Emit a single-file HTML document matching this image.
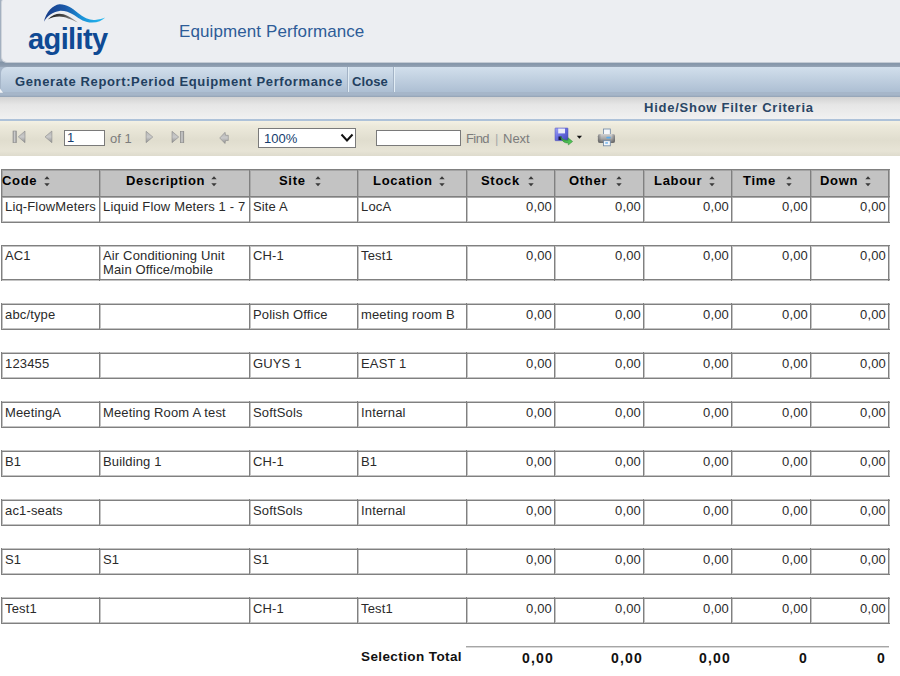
<!DOCTYPE html>
<html><head><meta charset="utf-8">
<style>
*{margin:0;padding:0;box-sizing:border-box}
html,body{width:900px;height:676px;overflow:hidden;background:#fff;font-family:"Liberation Sans",sans-serif;position:relative}
div{position:absolute}
#hdr{left:0;top:0;width:900px;height:67px;background:linear-gradient(#a3b0c0 0,#a3b0c0 61px,#8294a7 62px,#8a9aad 65px,#95a4b6 67px)}
#panel{left:1px;top:-3px;width:910px;height:66px;background:#eceef2;border-radius:6px;border-left:1px solid #d0d5dc;border-bottom:1px solid #c4cbd4}
#title{left:179px;top:22px;font-size:17px;color:#2d5c98;white-space:nowrap;letter-spacing:0.1px}

#tabs{left:0;top:67px;width:900px;height:30px;background:linear-gradient(#a6b6c9 25px,#a6b6c9 28px,#93a2b4 30px)}
#tabbar{left:1px;top:0;width:899px;height:25px;background:linear-gradient(#d2dfec,#adbfd3);border-top-left-radius:6px}
.tab{top:0;height:25px;font-weight:bold;font-size:13px;color:#223f60;line-height:30px;white-space:nowrap}
.tsep{top:0;width:2px;height:25px;border-left:1px solid #a3b3c6;border-right:1px solid #e2edf5}
#filt{left:0;top:97px;width:900px;height:22px;background:linear-gradient(#d3d3d3,#e6e6e6 35%,#f1f1f1)}
#filt span{position:absolute;left:644px;top:3px;font-weight:bold;font-size:13px;color:#2a4665;white-space:nowrap}
#tbline{left:0;top:119px;width:900px;height:2px;background:#aec2d9}
#tb{left:0;top:121px;width:900px;height:35px;background:linear-gradient(#f4f1e4,#ece9db 15%,#e0ddce 55%,#e7e4d6 85%,#dedbcd)}
.tbt{font-size:13px;color:#7c7c7c;white-space:nowrap}
.hrow{background:#c3c3c3;border:1px solid #7f7f7f;border-top:2px solid #8a8a8a}
.hc{top:173px;font-weight:bold;font-size:13px;color:#000;line-height:15px;white-space:nowrap;letter-spacing:0.7px}
.srt{top:176px;width:6px;height:11px}
.srt svg{display:block}
.row{border:1px solid #7f7f7f;background:#fff}
.vl{width:1px;background:#7f7f7f}
.c{font-size:13px;color:#2a2a2a;line-height:14px;padding:4px 4px 0 4px;white-space:nowrap;letter-spacing:0.15px}
.r{text-align:right;padding-right:2px}
.tot{top:650px;font-weight:bold;font-size:13px;color:#111;white-space:nowrap}
</style></head>
<body>
<div id="hdr"><div id="panel"></div>
<svg id="logo" style="position:absolute;left:0;top:0" width="120" height="60" viewBox="0 0 120 60">
 <defs><linearGradient id="sw" gradientUnits="userSpaceOnUse" x1="44" y1="0" x2="105" y2="0"><stop offset="0" stop-color="#183c88"/><stop offset="0.35" stop-color="#1b58a8"/><stop offset="0.62" stop-color="#1a92d8"/><stop offset="1" stop-color="#25baf0"/></linearGradient>
 <linearGradient id="gs" gradientUnits="userSpaceOnUse" x1="48" y1="0" x2="78" y2="0"><stop offset="0" stop-color="#1e1e1e"/><stop offset="0.5" stop-color="#444"/><stop offset="1" stop-color="#aaa"/></linearGradient></defs>
 <path d="M43.9 21.8 C46 12 53 5 59.4 4.3 C66 4 72 8 78 13 C84 18 90 20.5 95 20 C99 19.5 103 18.5 105.3 17.5 C102 20.5 98 22.5 92 22.6 C85 22.5 80 19.5 74 15 C69 12 64 10.5 59.4 10.9 C53 11.5 47 16 43.9 21.8 Z" fill="url(#sw)"/>
 <path d="M47.8 19.5 C52 15.5 56 13.8 59.4 13.8 C65 13.8 70 17 78.1 22.6 C71 19.5 65 16.5 59.4 16.5 C55 16.5 51 17.8 47.8 19.5 Z" fill="url(#gs)"/>
</svg>
<div style="left:28px;top:23px;font-size:29px;font-weight:bold;color:#0f4a94;letter-spacing:-0.6px;white-space:nowrap">agility</div>
<div id="title">Equipment Performance</div>
</div>
<div id="tabs"><div id="tabbar">
<div class="tab" style="left:14px;letter-spacing:0.62px">Generate Report:Period Equipment Performance</div>
<div class="tsep" style="left:346px"></div>
<div class="tab" style="left:351px;letter-spacing:0.1px">Close</div>
<div class="tsep" style="left:392px"></div>
</div></div>
<svg style="position:absolute;left:0;top:88px;z-index:3" width="4" height="5"><path d="M0 0.5 L3 4.8 L0 4.8Z" fill="#f4f6f8"/></svg>
<div id="filt"><span style="letter-spacing:0.75px">Hide/Show Filter Criteria</span></div>
<div id="tbline"></div>
<div id="tb">
</div>
<svg style="position:absolute;left:0;top:121px;z-index:5" width="640" height="34" viewBox="0 121 640 34">
<defs>
<linearGradient id="ig" x1="0" x2="0" y1="0" y2="1"><stop offset="0" stop-color="#b4b4b4"/><stop offset="0.5" stop-color="#cacaca"/><stop offset="1" stop-color="#8e8e8e"/></linearGradient>
<linearGradient id="bg2" x1="0" x2="1"><stop offset="0" stop-color="#9a9a9a"/><stop offset="0.5" stop-color="#cfcfcf"/><stop offset="1" stop-color="#8a8a8a"/></linearGradient>
</defs>
<rect x="13" y="131" width="3.3" height="11.7" fill="url(#bg2)" stroke="#8c8c8c" stroke-width="0.6"/>
<path d="M25 131 L18.3 136.85 L25 142.7Z" fill="url(#ig)" stroke="#8c8c8c" stroke-width="0.6"/>
<path d="M51.9 131 L45 136.85 L51.9 142.7Z" fill="url(#ig)" stroke="#8c8c8c" stroke-width="0.6"/>
<path d="M146.1 131.3 L152.8 137 L146.1 142.7Z" fill="url(#ig)" stroke="#8c8c8c" stroke-width="0.6"/>
<path d="M172 131.3 L178.7 137 L172 142.7Z" fill="url(#ig)" stroke="#8c8c8c" stroke-width="0.6"/>
<rect x="180.3" y="131.3" width="3.5" height="11.4" fill="url(#bg2)" stroke="#8c8c8c" stroke-width="0.6"/>
<path d="M219.7 138 L225 132.3 L225.6 135.3 L228.3 135.3 L228.3 140.5 L225.6 140.5 L225 143.5Z" fill="url(#ig)" stroke="#8c8c8c" stroke-width="0.6"/>
<path d="M341.5 134.5 L347 140.5 L352.5 134.5" fill="none" stroke="#111" stroke-width="2"/>
<defs>
<linearGradient id="fl" x1="0" y1="0" x2="1" y2="1"><stop offset="0" stop-color="#a3a5f7"/><stop offset="0.45" stop-color="#6b6fe2"/><stop offset="1" stop-color="#4146b8"/></linearGradient>
<linearGradient id="pb" x1="0" y1="0" x2="0" y2="1"><stop offset="0" stop-color="#d2d2d2"/><stop offset="0.5" stop-color="#a8a8a8"/><stop offset="1" stop-color="#6a6a6a"/></linearGradient>
<linearGradient id="ph" x1="0" y1="0" x2="1" y2="0"><stop offset="0" stop-color="#555" stop-opacity="0.6"/><stop offset="0.2" stop-color="#555" stop-opacity="0"/><stop offset="0.8" stop-color="#555" stop-opacity="0"/><stop offset="1" stop-color="#555" stop-opacity="0.6"/></linearGradient>
<linearGradient id="gr" x1="0" y1="0" x2="1" y2="1"><stop offset="0" stop-color="#2e9a3a"/><stop offset="1" stop-color="#5fd05f"/></linearGradient>
</defs>
<rect x="555" y="128" width="13" height="12.7" rx="0.6" fill="url(#fl)" stroke="#4a4fb0" stroke-width="0.5"/>
<rect x="558.2" y="128.6" width="6.8" height="4.8" fill="#ececf8"/>
<rect x="558.5" y="136.5" width="3" height="3.5" fill="#1a1a40"/>
<path d="M560.5 136 C562 139.5 565 140.5 568 140.2 L568 137.8 L572.6 141.5 L568.3 145 L568.3 143 C564 143.3 561.2 140.5 560.5 136Z" fill="url(#gr)" stroke="#2b8535" stroke-width="0.5"/>
<path d="M576.8 135.7 L582 135.7 L579.4 138.8Z" fill="#111"/>
<rect x="603.6" y="129" width="6.7" height="5.5" fill="#f4f7fb" stroke="#6f87a3" stroke-width="0.8"/>
<rect x="597.9" y="134" width="17.1" height="9" rx="2.2" fill="url(#pb)"/>
<rect x="597.9" y="134" width="17.1" height="9" rx="2.2" fill="url(#ph)"/>
<rect x="606.3" y="136.8" width="4.5" height="1.8" rx="0.8" fill="#5aaaea"/>
<rect x="603.6" y="140.7" width="6.7" height="5.1" fill="#f4f7fb" stroke="#6f87a3" stroke-width="0.8"/>
<rect x="605.3" y="142.3" width="2.6" height="1.3" fill="#5aaaea"/>
</svg>
<div class="tbt" style="left:110px;top:131px">of 1</div>
<div style="left:64px;top:130px;width:41px;height:16px;background:#fff;border:1px solid #7a7a7a;font-size:13px;color:#143c6e;line-height:14px;padding-left:2px">1</div>
<div style="left:258px;top:128px;width:98px;height:20px;background:#fff;border:1px solid #7a7a7a;font-size:13px;color:#143c6e;line-height:20px;padding-left:5px">100%</div>
<div style="left:376px;top:130px;width:85px;height:16px;background:#fff;border:1px solid #7a7a7a"></div>
<div class="tbt" style="left:466px;top:131px;letter-spacing:-0.6px">Find</div>
<div class="tbt" style="left:495px;top:131px;color:#aaa">|</div>
<div class="tbt" style="left:503px;top:131px">Next</div>
<div style="left:1px;top:169px;width:889px;height:29px;background:#c3c3c3"></div>
<div style="left:1px;top:169px;width:889px;height:1px;background:#808080"></div>
<div style="left:1px;top:170px;width:889px;height:1px;background:#a4a4a4"></div>
<div style="left:1px;top:196px;width:889px;height:1px;background:#808080"></div>
<div style="left:1px;top:197px;width:889px;height:1px;background:#a8a8a8"></div>
<div style="left:1px;top:169px;width:1px;height:29px;background:#808080"></div>
<div style="left:2px;top:171px;width:1px;height:25px;background:#a8a8a8"></div>
<div style="left:99px;top:169px;width:1px;height:29px;background:#808080"></div>
<div style="left:100px;top:171px;width:1px;height:25px;background:#a8a8a8"></div>
<div style="left:249px;top:169px;width:1px;height:29px;background:#808080"></div>
<div style="left:250px;top:171px;width:1px;height:25px;background:#a8a8a8"></div>
<div style="left:357px;top:169px;width:1px;height:29px;background:#808080"></div>
<div style="left:358px;top:171px;width:1px;height:25px;background:#a8a8a8"></div>
<div style="left:466px;top:169px;width:1px;height:29px;background:#808080"></div>
<div style="left:467px;top:171px;width:1px;height:25px;background:#a8a8a8"></div>
<div style="left:554px;top:169px;width:1px;height:29px;background:#808080"></div>
<div style="left:555px;top:171px;width:1px;height:25px;background:#a8a8a8"></div>
<div style="left:643px;top:169px;width:1px;height:29px;background:#808080"></div>
<div style="left:644px;top:171px;width:1px;height:25px;background:#a8a8a8"></div>
<div style="left:731px;top:169px;width:1px;height:29px;background:#808080"></div>
<div style="left:732px;top:171px;width:1px;height:25px;background:#a8a8a8"></div>
<div style="left:810px;top:169px;width:1px;height:29px;background:#808080"></div>
<div style="left:811px;top:171px;width:1px;height:25px;background:#a8a8a8"></div>
<div style="left:888px;top:169px;width:1px;height:29px;background:#808080"></div>
<div style="left:889px;top:171px;width:1px;height:25px;background:#a8a8a8"></div>
<div class="hc" style="left:2px">Code</div>
<div class="srt" style="left:44px"><svg width="6" height="11" viewBox="0 0 6 11"><path d="M0.3 3.2 L3 0.2 L5.7 3.2Z M0.3 7.3 L5.7 7.3 L3 10.3Z" fill="#3a3a3a"/></svg></div>
<div class="hc" style="left:126px">Description</div>
<div class="srt" style="left:211px"><svg width="6" height="11" viewBox="0 0 6 11"><path d="M0.3 3.2 L3 0.2 L5.7 3.2Z M0.3 7.3 L5.7 7.3 L3 10.3Z" fill="#3a3a3a"/></svg></div>
<div class="hc" style="left:279px">Site</div>
<div class="srt" style="left:315px"><svg width="6" height="11" viewBox="0 0 6 11"><path d="M0.3 3.2 L3 0.2 L5.7 3.2Z M0.3 7.3 L5.7 7.3 L3 10.3Z" fill="#3a3a3a"/></svg></div>
<div class="hc" style="left:373px">Location</div>
<div class="srt" style="left:439px"><svg width="6" height="11" viewBox="0 0 6 11"><path d="M0.3 3.2 L3 0.2 L5.7 3.2Z M0.3 7.3 L5.7 7.3 L3 10.3Z" fill="#3a3a3a"/></svg></div>
<div class="hc" style="left:481px">Stock</div>
<div class="srt" style="left:528px"><svg width="6" height="11" viewBox="0 0 6 11"><path d="M0.3 3.2 L3 0.2 L5.7 3.2Z M0.3 7.3 L5.7 7.3 L3 10.3Z" fill="#3a3a3a"/></svg></div>
<div class="hc" style="left:569px">Other</div>
<div class="srt" style="left:616px"><svg width="6" height="11" viewBox="0 0 6 11"><path d="M0.3 3.2 L3 0.2 L5.7 3.2Z M0.3 7.3 L5.7 7.3 L3 10.3Z" fill="#3a3a3a"/></svg></div>
<div class="hc" style="left:654px">Labour</div>
<div class="srt" style="left:709px"><svg width="6" height="11" viewBox="0 0 6 11"><path d="M0.3 3.2 L3 0.2 L5.7 3.2Z M0.3 7.3 L5.7 7.3 L3 10.3Z" fill="#3a3a3a"/></svg></div>
<div class="hc" style="left:743px">Time</div>
<div class="srt" style="left:786px"><svg width="6" height="11" viewBox="0 0 6 11"><path d="M0.3 3.2 L3 0.2 L5.7 3.2Z M0.3 7.3 L5.7 7.3 L3 10.3Z" fill="#3a3a3a"/></svg></div>
<div class="hc" style="left:820px">Down</div>
<div class="srt" style="left:865px"><svg width="6" height="11" viewBox="0 0 6 11"><path d="M0.3 3.2 L3 0.2 L5.7 3.2Z M0.3 7.3 L5.7 7.3 L3 10.3Z" fill="#3a3a3a"/></svg></div>
<div style="left:1px;top:222px;width:889px;height:1px;background:#808080"></div>
<div style="left:1px;top:221px;width:889px;height:1px;background:#c4c4c4"></div>
<div style="left:1px;top:198px;width:1px;height:25px;background:#808080"></div>
<div style="left:2px;top:198px;width:1px;height:23px;background:#c4c4c4"></div>
<div style="left:99px;top:198px;width:1px;height:25px;background:#808080"></div>
<div style="left:100px;top:198px;width:1px;height:23px;background:#c4c4c4"></div>
<div style="left:249px;top:198px;width:1px;height:25px;background:#808080"></div>
<div style="left:250px;top:198px;width:1px;height:23px;background:#c4c4c4"></div>
<div style="left:357px;top:198px;width:1px;height:25px;background:#808080"></div>
<div style="left:358px;top:198px;width:1px;height:23px;background:#c4c4c4"></div>
<div style="left:466px;top:198px;width:1px;height:25px;background:#808080"></div>
<div style="left:467px;top:198px;width:1px;height:23px;background:#c4c4c4"></div>
<div style="left:554px;top:198px;width:1px;height:25px;background:#808080"></div>
<div style="left:555px;top:198px;width:1px;height:23px;background:#c4c4c4"></div>
<div style="left:643px;top:198px;width:1px;height:25px;background:#808080"></div>
<div style="left:644px;top:198px;width:1px;height:23px;background:#c4c4c4"></div>
<div style="left:731px;top:198px;width:1px;height:25px;background:#808080"></div>
<div style="left:732px;top:198px;width:1px;height:23px;background:#c4c4c4"></div>
<div style="left:810px;top:198px;width:1px;height:25px;background:#808080"></div>
<div style="left:811px;top:198px;width:1px;height:23px;background:#c4c4c4"></div>
<div style="left:888px;top:198px;width:1px;height:25px;background:#808080"></div>
<div style="left:889px;top:198px;width:1px;height:23px;background:#c4c4c4"></div>
<div class="c" style="left:1px;top:196px;width:98px">Liq-FlowMeters</div>
<div class="c" style="left:99px;top:196px;width:150px">Liquid Flow Meters 1 - 7</div>
<div class="c" style="left:249px;top:196px;width:108px">Site A</div>
<div class="c" style="left:357px;top:196px;width:109px">LocA</div>
<div class="c r" style="left:466px;top:196px;width:88px">0,00</div>
<div class="c r" style="left:554px;top:196px;width:89px">0,00</div>
<div class="c r" style="left:643px;top:196px;width:88px">0,00</div>
<div class="c r" style="left:731px;top:196px;width:79px">0,00</div>
<div class="c r" style="left:810px;top:196px;width:78px">0,00</div>
<div style="left:1px;top:245px;width:889px;height:1px;background:#808080"></div>
<div style="left:1px;top:246px;width:889px;height:1px;background:#c4c4c4"></div>
<div style="left:1px;top:279px;width:889px;height:1px;background:#808080"></div>
<div style="left:1px;top:280px;width:889px;height:1px;background:#c4c4c4"></div>
<div style="left:1px;top:245px;width:1px;height:36px;background:#808080"></div>
<div style="left:2px;top:247px;width:1px;height:32px;background:#c4c4c4"></div>
<div style="left:99px;top:245px;width:1px;height:36px;background:#808080"></div>
<div style="left:100px;top:247px;width:1px;height:32px;background:#c4c4c4"></div>
<div style="left:249px;top:245px;width:1px;height:36px;background:#808080"></div>
<div style="left:250px;top:247px;width:1px;height:32px;background:#c4c4c4"></div>
<div style="left:357px;top:245px;width:1px;height:36px;background:#808080"></div>
<div style="left:358px;top:247px;width:1px;height:32px;background:#c4c4c4"></div>
<div style="left:466px;top:245px;width:1px;height:36px;background:#808080"></div>
<div style="left:467px;top:247px;width:1px;height:32px;background:#c4c4c4"></div>
<div style="left:554px;top:245px;width:1px;height:36px;background:#808080"></div>
<div style="left:555px;top:247px;width:1px;height:32px;background:#c4c4c4"></div>
<div style="left:643px;top:245px;width:1px;height:36px;background:#808080"></div>
<div style="left:644px;top:247px;width:1px;height:32px;background:#c4c4c4"></div>
<div style="left:731px;top:245px;width:1px;height:36px;background:#808080"></div>
<div style="left:732px;top:247px;width:1px;height:32px;background:#c4c4c4"></div>
<div style="left:810px;top:245px;width:1px;height:36px;background:#808080"></div>
<div style="left:811px;top:247px;width:1px;height:32px;background:#c4c4c4"></div>
<div style="left:888px;top:245px;width:1px;height:36px;background:#808080"></div>
<div style="left:889px;top:247px;width:1px;height:32px;background:#c4c4c4"></div>
<div class="c" style="left:1px;top:245px;width:98px">AC1</div>
<div class="c" style="left:99px;top:245px;width:150px">Air Conditioning Unit<br>Main Office/mobile</div>
<div class="c" style="left:249px;top:245px;width:108px">CH-1</div>
<div class="c" style="left:357px;top:245px;width:109px">Test1</div>
<div class="c r" style="left:466px;top:245px;width:88px">0,00</div>
<div class="c r" style="left:554px;top:245px;width:89px">0,00</div>
<div class="c r" style="left:643px;top:245px;width:88px">0,00</div>
<div class="c r" style="left:731px;top:245px;width:79px">0,00</div>
<div class="c r" style="left:810px;top:245px;width:78px">0,00</div>
<div style="left:1px;top:304px;width:889px;height:1px;background:#808080"></div>
<div style="left:1px;top:303px;width:889px;height:1px;background:#c4c4c4"></div>
<div style="left:1px;top:329px;width:889px;height:1px;background:#808080"></div>
<div style="left:1px;top:328px;width:889px;height:1px;background:#c4c4c4"></div>
<div style="left:1px;top:303px;width:1px;height:27px;background:#808080"></div>
<div style="left:2px;top:305px;width:1px;height:23px;background:#c4c4c4"></div>
<div style="left:99px;top:303px;width:1px;height:27px;background:#808080"></div>
<div style="left:100px;top:305px;width:1px;height:23px;background:#c4c4c4"></div>
<div style="left:249px;top:303px;width:1px;height:27px;background:#808080"></div>
<div style="left:250px;top:305px;width:1px;height:23px;background:#c4c4c4"></div>
<div style="left:357px;top:303px;width:1px;height:27px;background:#808080"></div>
<div style="left:358px;top:305px;width:1px;height:23px;background:#c4c4c4"></div>
<div style="left:466px;top:303px;width:1px;height:27px;background:#808080"></div>
<div style="left:467px;top:305px;width:1px;height:23px;background:#c4c4c4"></div>
<div style="left:554px;top:303px;width:1px;height:27px;background:#808080"></div>
<div style="left:555px;top:305px;width:1px;height:23px;background:#c4c4c4"></div>
<div style="left:643px;top:303px;width:1px;height:27px;background:#808080"></div>
<div style="left:644px;top:305px;width:1px;height:23px;background:#c4c4c4"></div>
<div style="left:731px;top:303px;width:1px;height:27px;background:#808080"></div>
<div style="left:732px;top:305px;width:1px;height:23px;background:#c4c4c4"></div>
<div style="left:810px;top:303px;width:1px;height:27px;background:#808080"></div>
<div style="left:811px;top:305px;width:1px;height:23px;background:#c4c4c4"></div>
<div style="left:888px;top:303px;width:1px;height:27px;background:#808080"></div>
<div style="left:889px;top:305px;width:1px;height:23px;background:#c4c4c4"></div>
<div class="c" style="left:1px;top:304px;width:98px">abc/type</div>
<div class="c" style="left:99px;top:304px;width:150px"></div>
<div class="c" style="left:249px;top:304px;width:108px">Polish Office</div>
<div class="c" style="left:357px;top:304px;width:109px">meeting room B</div>
<div class="c r" style="left:466px;top:304px;width:88px">0,00</div>
<div class="c r" style="left:554px;top:304px;width:89px">0,00</div>
<div class="c r" style="left:643px;top:304px;width:88px">0,00</div>
<div class="c r" style="left:731px;top:304px;width:79px">0,00</div>
<div class="c r" style="left:810px;top:304px;width:78px">0,00</div>
<div style="left:1px;top:353px;width:889px;height:1px;background:#808080"></div>
<div style="left:1px;top:352px;width:889px;height:1px;background:#c4c4c4"></div>
<div style="left:1px;top:378px;width:889px;height:1px;background:#808080"></div>
<div style="left:1px;top:377px;width:889px;height:1px;background:#c4c4c4"></div>
<div style="left:1px;top:352px;width:1px;height:27px;background:#808080"></div>
<div style="left:2px;top:354px;width:1px;height:23px;background:#c4c4c4"></div>
<div style="left:99px;top:352px;width:1px;height:27px;background:#808080"></div>
<div style="left:100px;top:354px;width:1px;height:23px;background:#c4c4c4"></div>
<div style="left:249px;top:352px;width:1px;height:27px;background:#808080"></div>
<div style="left:250px;top:354px;width:1px;height:23px;background:#c4c4c4"></div>
<div style="left:357px;top:352px;width:1px;height:27px;background:#808080"></div>
<div style="left:358px;top:354px;width:1px;height:23px;background:#c4c4c4"></div>
<div style="left:466px;top:352px;width:1px;height:27px;background:#808080"></div>
<div style="left:467px;top:354px;width:1px;height:23px;background:#c4c4c4"></div>
<div style="left:554px;top:352px;width:1px;height:27px;background:#808080"></div>
<div style="left:555px;top:354px;width:1px;height:23px;background:#c4c4c4"></div>
<div style="left:643px;top:352px;width:1px;height:27px;background:#808080"></div>
<div style="left:644px;top:354px;width:1px;height:23px;background:#c4c4c4"></div>
<div style="left:731px;top:352px;width:1px;height:27px;background:#808080"></div>
<div style="left:732px;top:354px;width:1px;height:23px;background:#c4c4c4"></div>
<div style="left:810px;top:352px;width:1px;height:27px;background:#808080"></div>
<div style="left:811px;top:354px;width:1px;height:23px;background:#c4c4c4"></div>
<div style="left:888px;top:352px;width:1px;height:27px;background:#808080"></div>
<div style="left:889px;top:354px;width:1px;height:23px;background:#c4c4c4"></div>
<div class="c" style="left:1px;top:353px;width:98px">123455</div>
<div class="c" style="left:99px;top:353px;width:150px"></div>
<div class="c" style="left:249px;top:353px;width:108px">GUYS 1</div>
<div class="c" style="left:357px;top:353px;width:109px">EAST 1</div>
<div class="c r" style="left:466px;top:353px;width:88px">0,00</div>
<div class="c r" style="left:554px;top:353px;width:89px">0,00</div>
<div class="c r" style="left:643px;top:353px;width:88px">0,00</div>
<div class="c r" style="left:731px;top:353px;width:79px">0,00</div>
<div class="c r" style="left:810px;top:353px;width:78px">0,00</div>
<div style="left:1px;top:402px;width:889px;height:1px;background:#808080"></div>
<div style="left:1px;top:401px;width:889px;height:1px;background:#c4c4c4"></div>
<div style="left:1px;top:427px;width:889px;height:1px;background:#808080"></div>
<div style="left:1px;top:426px;width:889px;height:1px;background:#c4c4c4"></div>
<div style="left:1px;top:401px;width:1px;height:27px;background:#808080"></div>
<div style="left:2px;top:403px;width:1px;height:23px;background:#c4c4c4"></div>
<div style="left:99px;top:401px;width:1px;height:27px;background:#808080"></div>
<div style="left:100px;top:403px;width:1px;height:23px;background:#c4c4c4"></div>
<div style="left:249px;top:401px;width:1px;height:27px;background:#808080"></div>
<div style="left:250px;top:403px;width:1px;height:23px;background:#c4c4c4"></div>
<div style="left:357px;top:401px;width:1px;height:27px;background:#808080"></div>
<div style="left:358px;top:403px;width:1px;height:23px;background:#c4c4c4"></div>
<div style="left:466px;top:401px;width:1px;height:27px;background:#808080"></div>
<div style="left:467px;top:403px;width:1px;height:23px;background:#c4c4c4"></div>
<div style="left:554px;top:401px;width:1px;height:27px;background:#808080"></div>
<div style="left:555px;top:403px;width:1px;height:23px;background:#c4c4c4"></div>
<div style="left:643px;top:401px;width:1px;height:27px;background:#808080"></div>
<div style="left:644px;top:403px;width:1px;height:23px;background:#c4c4c4"></div>
<div style="left:731px;top:401px;width:1px;height:27px;background:#808080"></div>
<div style="left:732px;top:403px;width:1px;height:23px;background:#c4c4c4"></div>
<div style="left:810px;top:401px;width:1px;height:27px;background:#808080"></div>
<div style="left:811px;top:403px;width:1px;height:23px;background:#c4c4c4"></div>
<div style="left:888px;top:401px;width:1px;height:27px;background:#808080"></div>
<div style="left:889px;top:403px;width:1px;height:23px;background:#c4c4c4"></div>
<div class="c" style="left:1px;top:402px;width:98px">MeetingA</div>
<div class="c" style="left:99px;top:402px;width:150px">Meeting Room A test</div>
<div class="c" style="left:249px;top:402px;width:108px">SoftSols</div>
<div class="c" style="left:357px;top:402px;width:109px">Internal</div>
<div class="c r" style="left:466px;top:402px;width:88px">0,00</div>
<div class="c r" style="left:554px;top:402px;width:89px">0,00</div>
<div class="c r" style="left:643px;top:402px;width:88px">0,00</div>
<div class="c r" style="left:731px;top:402px;width:79px">0,00</div>
<div class="c r" style="left:810px;top:402px;width:78px">0,00</div>
<div style="left:1px;top:451px;width:889px;height:1px;background:#808080"></div>
<div style="left:1px;top:450px;width:889px;height:1px;background:#c4c4c4"></div>
<div style="left:1px;top:476px;width:889px;height:1px;background:#808080"></div>
<div style="left:1px;top:475px;width:889px;height:1px;background:#c4c4c4"></div>
<div style="left:1px;top:450px;width:1px;height:27px;background:#808080"></div>
<div style="left:2px;top:452px;width:1px;height:23px;background:#c4c4c4"></div>
<div style="left:99px;top:450px;width:1px;height:27px;background:#808080"></div>
<div style="left:100px;top:452px;width:1px;height:23px;background:#c4c4c4"></div>
<div style="left:249px;top:450px;width:1px;height:27px;background:#808080"></div>
<div style="left:250px;top:452px;width:1px;height:23px;background:#c4c4c4"></div>
<div style="left:357px;top:450px;width:1px;height:27px;background:#808080"></div>
<div style="left:358px;top:452px;width:1px;height:23px;background:#c4c4c4"></div>
<div style="left:466px;top:450px;width:1px;height:27px;background:#808080"></div>
<div style="left:467px;top:452px;width:1px;height:23px;background:#c4c4c4"></div>
<div style="left:554px;top:450px;width:1px;height:27px;background:#808080"></div>
<div style="left:555px;top:452px;width:1px;height:23px;background:#c4c4c4"></div>
<div style="left:643px;top:450px;width:1px;height:27px;background:#808080"></div>
<div style="left:644px;top:452px;width:1px;height:23px;background:#c4c4c4"></div>
<div style="left:731px;top:450px;width:1px;height:27px;background:#808080"></div>
<div style="left:732px;top:452px;width:1px;height:23px;background:#c4c4c4"></div>
<div style="left:810px;top:450px;width:1px;height:27px;background:#808080"></div>
<div style="left:811px;top:452px;width:1px;height:23px;background:#c4c4c4"></div>
<div style="left:888px;top:450px;width:1px;height:27px;background:#808080"></div>
<div style="left:889px;top:452px;width:1px;height:23px;background:#c4c4c4"></div>
<div class="c" style="left:1px;top:451px;width:98px">B1</div>
<div class="c" style="left:99px;top:451px;width:150px">Building 1</div>
<div class="c" style="left:249px;top:451px;width:108px">CH-1</div>
<div class="c" style="left:357px;top:451px;width:109px">B1</div>
<div class="c r" style="left:466px;top:451px;width:88px">0,00</div>
<div class="c r" style="left:554px;top:451px;width:89px">0,00</div>
<div class="c r" style="left:643px;top:451px;width:88px">0,00</div>
<div class="c r" style="left:731px;top:451px;width:79px">0,00</div>
<div class="c r" style="left:810px;top:451px;width:78px">0,00</div>
<div style="left:1px;top:500px;width:889px;height:1px;background:#808080"></div>
<div style="left:1px;top:499px;width:889px;height:1px;background:#c4c4c4"></div>
<div style="left:1px;top:525px;width:889px;height:1px;background:#808080"></div>
<div style="left:1px;top:524px;width:889px;height:1px;background:#c4c4c4"></div>
<div style="left:1px;top:499px;width:1px;height:27px;background:#808080"></div>
<div style="left:2px;top:501px;width:1px;height:23px;background:#c4c4c4"></div>
<div style="left:99px;top:499px;width:1px;height:27px;background:#808080"></div>
<div style="left:100px;top:501px;width:1px;height:23px;background:#c4c4c4"></div>
<div style="left:249px;top:499px;width:1px;height:27px;background:#808080"></div>
<div style="left:250px;top:501px;width:1px;height:23px;background:#c4c4c4"></div>
<div style="left:357px;top:499px;width:1px;height:27px;background:#808080"></div>
<div style="left:358px;top:501px;width:1px;height:23px;background:#c4c4c4"></div>
<div style="left:466px;top:499px;width:1px;height:27px;background:#808080"></div>
<div style="left:467px;top:501px;width:1px;height:23px;background:#c4c4c4"></div>
<div style="left:554px;top:499px;width:1px;height:27px;background:#808080"></div>
<div style="left:555px;top:501px;width:1px;height:23px;background:#c4c4c4"></div>
<div style="left:643px;top:499px;width:1px;height:27px;background:#808080"></div>
<div style="left:644px;top:501px;width:1px;height:23px;background:#c4c4c4"></div>
<div style="left:731px;top:499px;width:1px;height:27px;background:#808080"></div>
<div style="left:732px;top:501px;width:1px;height:23px;background:#c4c4c4"></div>
<div style="left:810px;top:499px;width:1px;height:27px;background:#808080"></div>
<div style="left:811px;top:501px;width:1px;height:23px;background:#c4c4c4"></div>
<div style="left:888px;top:499px;width:1px;height:27px;background:#808080"></div>
<div style="left:889px;top:501px;width:1px;height:23px;background:#c4c4c4"></div>
<div class="c" style="left:1px;top:500px;width:98px">ac1-seats</div>
<div class="c" style="left:99px;top:500px;width:150px"></div>
<div class="c" style="left:249px;top:500px;width:108px">SoftSols</div>
<div class="c" style="left:357px;top:500px;width:109px">Internal</div>
<div class="c r" style="left:466px;top:500px;width:88px">0,00</div>
<div class="c r" style="left:554px;top:500px;width:89px">0,00</div>
<div class="c r" style="left:643px;top:500px;width:88px">0,00</div>
<div class="c r" style="left:731px;top:500px;width:79px">0,00</div>
<div class="c r" style="left:810px;top:500px;width:78px">0,00</div>
<div style="left:1px;top:549px;width:889px;height:1px;background:#808080"></div>
<div style="left:1px;top:548px;width:889px;height:1px;background:#c4c4c4"></div>
<div style="left:1px;top:574px;width:889px;height:1px;background:#808080"></div>
<div style="left:1px;top:573px;width:889px;height:1px;background:#c4c4c4"></div>
<div style="left:1px;top:548px;width:1px;height:27px;background:#808080"></div>
<div style="left:2px;top:550px;width:1px;height:23px;background:#c4c4c4"></div>
<div style="left:99px;top:548px;width:1px;height:27px;background:#808080"></div>
<div style="left:100px;top:550px;width:1px;height:23px;background:#c4c4c4"></div>
<div style="left:249px;top:548px;width:1px;height:27px;background:#808080"></div>
<div style="left:250px;top:550px;width:1px;height:23px;background:#c4c4c4"></div>
<div style="left:357px;top:548px;width:1px;height:27px;background:#808080"></div>
<div style="left:358px;top:550px;width:1px;height:23px;background:#c4c4c4"></div>
<div style="left:466px;top:548px;width:1px;height:27px;background:#808080"></div>
<div style="left:467px;top:550px;width:1px;height:23px;background:#c4c4c4"></div>
<div style="left:554px;top:548px;width:1px;height:27px;background:#808080"></div>
<div style="left:555px;top:550px;width:1px;height:23px;background:#c4c4c4"></div>
<div style="left:643px;top:548px;width:1px;height:27px;background:#808080"></div>
<div style="left:644px;top:550px;width:1px;height:23px;background:#c4c4c4"></div>
<div style="left:731px;top:548px;width:1px;height:27px;background:#808080"></div>
<div style="left:732px;top:550px;width:1px;height:23px;background:#c4c4c4"></div>
<div style="left:810px;top:548px;width:1px;height:27px;background:#808080"></div>
<div style="left:811px;top:550px;width:1px;height:23px;background:#c4c4c4"></div>
<div style="left:888px;top:548px;width:1px;height:27px;background:#808080"></div>
<div style="left:889px;top:550px;width:1px;height:23px;background:#c4c4c4"></div>
<div class="c" style="left:1px;top:549px;width:98px">S1</div>
<div class="c" style="left:99px;top:549px;width:150px">S1</div>
<div class="c" style="left:249px;top:549px;width:108px">S1</div>
<div class="c" style="left:357px;top:549px;width:109px"></div>
<div class="c r" style="left:466px;top:549px;width:88px">0,00</div>
<div class="c r" style="left:554px;top:549px;width:89px">0,00</div>
<div class="c r" style="left:643px;top:549px;width:88px">0,00</div>
<div class="c r" style="left:731px;top:549px;width:79px">0,00</div>
<div class="c r" style="left:810px;top:549px;width:78px">0,00</div>
<div style="left:1px;top:598px;width:889px;height:1px;background:#808080"></div>
<div style="left:1px;top:597px;width:889px;height:1px;background:#c4c4c4"></div>
<div style="left:1px;top:623px;width:889px;height:1px;background:#808080"></div>
<div style="left:1px;top:622px;width:889px;height:1px;background:#c4c4c4"></div>
<div style="left:1px;top:597px;width:1px;height:27px;background:#808080"></div>
<div style="left:2px;top:599px;width:1px;height:23px;background:#c4c4c4"></div>
<div style="left:99px;top:597px;width:1px;height:27px;background:#808080"></div>
<div style="left:100px;top:599px;width:1px;height:23px;background:#c4c4c4"></div>
<div style="left:249px;top:597px;width:1px;height:27px;background:#808080"></div>
<div style="left:250px;top:599px;width:1px;height:23px;background:#c4c4c4"></div>
<div style="left:357px;top:597px;width:1px;height:27px;background:#808080"></div>
<div style="left:358px;top:599px;width:1px;height:23px;background:#c4c4c4"></div>
<div style="left:466px;top:597px;width:1px;height:27px;background:#808080"></div>
<div style="left:467px;top:599px;width:1px;height:23px;background:#c4c4c4"></div>
<div style="left:554px;top:597px;width:1px;height:27px;background:#808080"></div>
<div style="left:555px;top:599px;width:1px;height:23px;background:#c4c4c4"></div>
<div style="left:643px;top:597px;width:1px;height:27px;background:#808080"></div>
<div style="left:644px;top:599px;width:1px;height:23px;background:#c4c4c4"></div>
<div style="left:731px;top:597px;width:1px;height:27px;background:#808080"></div>
<div style="left:732px;top:599px;width:1px;height:23px;background:#c4c4c4"></div>
<div style="left:810px;top:597px;width:1px;height:27px;background:#808080"></div>
<div style="left:811px;top:599px;width:1px;height:23px;background:#c4c4c4"></div>
<div style="left:888px;top:597px;width:1px;height:27px;background:#808080"></div>
<div style="left:889px;top:599px;width:1px;height:23px;background:#c4c4c4"></div>
<div class="c" style="left:1px;top:598px;width:98px">Test1</div>
<div class="c" style="left:99px;top:598px;width:150px"></div>
<div class="c" style="left:249px;top:598px;width:108px">CH-1</div>
<div class="c" style="left:357px;top:598px;width:109px">Test1</div>
<div class="c r" style="left:466px;top:598px;width:88px">0,00</div>
<div class="c r" style="left:554px;top:598px;width:89px">0,00</div>
<div class="c r" style="left:643px;top:598px;width:88px">0,00</div>
<div class="c r" style="left:731px;top:598px;width:79px">0,00</div>
<div class="c r" style="left:810px;top:598px;width:78px">0,00</div>
<div style="left:466px;top:646px;width:423px;height:1px;background:#a6a6a6"></div>
<div style="left:466px;top:647px;width:423px;height:1px;background:#d8d8d8"></div>
<div class="tot" style="left:361px;top:649px;letter-spacing:0.4px;font-size:13.5px">Selection Total</div>
<div class="tot" style="left:522px;letter-spacing:1.2px;font-size:14px">0,00</div>
<div class="tot" style="left:611px;letter-spacing:1.2px;font-size:14px">0,00</div>
<div class="tot" style="left:699px;letter-spacing:1.2px;font-size:14px">0,00</div>
<div class="tot" style="left:799px;font-size:14px">0</div>
<div class="tot" style="left:877px;font-size:14px">0</div>
</body></html>
